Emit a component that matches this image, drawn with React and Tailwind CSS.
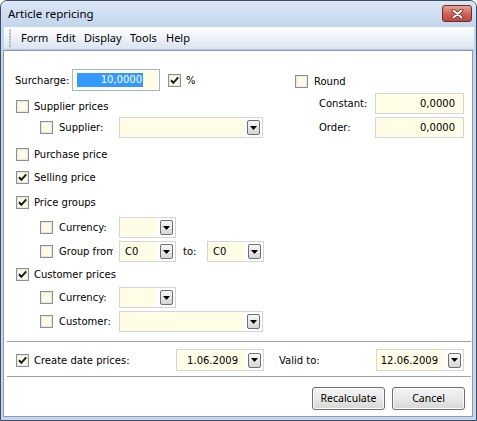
import React from "react";

function Check({ checked }) {
  return (
    <span className="w-[13px] h-[13px] shrink-0 border border-[#8e8f8f] bg-[#fcfce4] shadow-[inset_0_0_0_1px_#e6e6e6] flex items-center justify-center">
      {checked && (
        <svg width="11" height="11" viewBox="0 0 11 11">
          <path d="M2 5.2 L4.4 7.8 L9.2 2.4" fill="none" stroke="#1a1a1a" strokeWidth="2" />
        </svg>
      )}
    </span>
  );
}

function DropBtn() {
  return (
    <span className="w-[13px] h-[15px] rounded-[2px] border border-[#6f6f6f] bg-linear-to-b from-[#f7f7f7] to-[#d6d6d6] flex items-center justify-center">
      <svg width="7" height="4" viewBox="0 0 7 4">
        <path d="M0 0 H7 L3.5 4 Z" fill="#000" />
      </svg>
    </span>
  );
}

function Combo({ w, value, right }) {
  return (
    <div className={"flex h-[21px] border border-[#d2d5d9] bg-white shrink-0 " + w}>
      <div
        className={
          right
            ? "flex-1 bg-[#fffde6] flex items-center justify-end pr-[7px]"
            : "flex-1 bg-[#fffde6] flex items-center pl-[5px]"
        }
      >
        {value}
      </div>
      <div className="w-[18px] flex items-center justify-center">
        <DropBtn />
      </div>
    </div>
  );
}

function NumInput({ value }) {
  return (
    <div className="w-[89px] h-[21px] border border-[#d2d5d9] bg-[#fffde6] flex items-center justify-end pr-[8px]">
      {value}
    </div>
  );
}

function Btn({ children }) {
  return (
    <div className="w-[73px] h-[23px] rounded-[3px] border border-[#707070] bg-linear-to-b from-[#f3f3f3] via-[#e9e9e9] to-[#d6d6d6] shadow-[inset_0_0_0_1px_#fbfbfb] flex items-center justify-center font-['Noto_Sans',sans-serif] text-[10.5px] text-black">
      {children}
    </div>
  );
}

export default function App() {
  return (
    <div className="w-[477px] h-[421px] bg-[#c4d6ed] border border-[#3a4d68] rounded-t-[7px] flex flex-col overflow-hidden text-black">
      {/* Title bar */}
      <div className="h-[26px] flex items-start bg-linear-to-b from-[#dbe6f4] to-[#c3d6ed] shrink-0">
        <span className="ml-[7px] mt-[5px] font-['Noto_Sans',sans-serif] text-[11.5px] leading-[16px]">
          Article repricing
        </span>
        <div className="ml-auto mr-[4px] mt-[4px] w-[30px] h-[17px] rounded-[3px] border border-[#6b2d28] bg-linear-to-b from-[#e9a598] via-[#d0645a] to-[#c0473c] flex items-center justify-center">
          <svg width="13" height="10" viewBox="0 0 13 10">
            <path d="M2.5 1.5 L10.5 8.5 M10.5 1.5 L2.5 8.5" stroke="#5a2420" strokeWidth="3.6" strokeLinecap="round" />
            <path d="M2.5 1.5 L10.5 8.5 M10.5 1.5 L2.5 8.5" stroke="#ffffff" strokeWidth="2" strokeLinecap="round" />
          </svg>
        </div>
      </div>

      {/* Menu bar */}
      <div className="h-[23px] ml-[3px] mr-[2px] flex items-center bg-linear-to-b from-white to-[#dbe4f2] border-b border-[#b7c5d9] shrink-0 font-['Noto_Sans',sans-serif] text-[11px]">
        <svg width="3" height="19" viewBox="0 0 3 19" className="ml-[5px]">
          {[0, 1, 2, 3, 4, 5, 6].map((i) => (
            <rect key={i} x="0" y={i * 3 + 0.5} width="2" height="2" fill="#a9b5c6" />
          ))}
        </svg>
        <div className="ml-[9px] flex">
          <span className="w-[35px]">Form</span>
          <span className="w-[28px]">Edit</span>
          <span className="w-[46px]">Display</span>
          <span className="w-[36px]">Tools</span>
          <span>Help</span>
        </div>
      </div>

      {/* Content panel */}
      <div className="flex-1 ml-[2px] mr-[3px] mb-[3px] bg-white border border-[#8d9aab] flex flex-col font-['DejaVu_Sans',sans-serif] text-[10px]">
        <div className="flex">
          <div className="w-[280px] pl-[11px] flex flex-col">
            <div className="mt-[18px] h-[22px] flex items-center">
              <span className="w-[57px]">Surcharge:</span>
              <div className="w-[88px] h-[22px] border border-[#9fb6d0] bg-[#fffde6] flex items-center justify-end pr-[16px]">
                <span className="w-[66px] h-[14px] leading-[14px] bg-[#3399ff] text-white text-right pr-[1px]">10,0000</span>
              </div>
              <span className="ml-[8px]"><Check checked /></span>
              <span className="ml-[5px]">%</span>
            </div>
            <div className="mt-[4px] h-[22px] flex items-center pl-[1px]">
              <Check />
              <span className="ml-[5px]">Supplier prices</span>
            </div>
            <div className="h-[21px] flex items-center pl-[25px]">
              <Check />
              <span className="ml-[6px] mr-[6px] w-[54px] overflow-hidden whitespace-nowrap">Supplier:</span>
              <Combo w="w-[144px]" value="" />
            </div>
          </div>
          <div className="flex-1 flex flex-col">
            <div className="mt-[19px] h-[22px] flex items-center pl-[11px]">
              <Check />
              <span className="ml-[6px]">Round</span>
            </div>
            <div className="mt-[1px] h-[21px] flex items-center pl-[35px]">
              <span className="w-[56px]">Constant:</span>
              <NumInput value="0,0000" />
            </div>
            <div className="mt-[3px] h-[21px] flex items-center pl-[35px]">
              <span className="w-[56px]">Order:</span>
              <NumInput value="0,0000" />
            </div>
          </div>
        </div>

        <div className="mt-[5px] h-[22px] flex items-center pl-[12px]">
          <Check />
          <span className="ml-[5px]">Purchase price</span>
        </div>
        <div className="mt-[1px] h-[22px] flex items-center pl-[12px]">
          <Check checked />
          <span className="ml-[5px]">Selling price</span>
        </div>
        <div className="mt-[3px] h-[22px] flex items-center pl-[12px]">
          <Check checked />
          <span className="ml-[5px]">Price groups</span>
        </div>
        <div className="mt-[4px] h-[21px] flex items-center pl-[36px]">
          <Check />
          <span className="ml-[6px] mr-[6px] w-[54px] overflow-hidden whitespace-nowrap">Currency:</span>
          <Combo w="w-[57px]" value="" />
        </div>
        <div className="mt-[3px] h-[21px] flex items-center pl-[36px]">
          <Check />
          <span className="ml-[6px] mr-[6px] w-[54px] overflow-hidden whitespace-nowrap">Group from</span>
          <Combo w="w-[57px]" value="C0" />
          <span className="ml-[7px] w-[24px]">to:</span>
          <Combo w="w-[57px]" value="C0" />
        </div>
        <div className="mt-[1px] h-[22px] flex items-center pl-[12px]">
          <Check checked />
          <span className="ml-[5px]">Customer prices</span>
        </div>
        <div className="mt-[2px] h-[21px] flex items-center pl-[36px]">
          <Check />
          <span className="ml-[6px] mr-[6px] w-[54px] overflow-hidden whitespace-nowrap">Currency:</span>
          <Combo w="w-[57px]" value="" />
        </div>
        <div className="mt-[3px] h-[21px] flex items-center pl-[36px]">
          <Check />
          <span className="ml-[6px] mr-[6px] w-[54px] overflow-hidden whitespace-nowrap">Customer:</span>
          <Combo w="w-[144px]" value="" />
        </div>

        <div className="mt-[9px] h-px ml-[3px] mr-[1px] bg-[#a0a0a0]" />

        <div className="mt-[7px] h-[22px] flex items-center pl-[12px]">
          <Check checked />
          <span className="ml-[5px] w-[142px]">Create date prices:</span>
          <Combo w="w-[88px] h-[22px]" value="1.06.2009" right />
          <span className="ml-[15px] w-[97px]">Valid to:</span>
          <Combo w="w-[88px] h-[22px]" value="12.06.2009" right />
        </div>

        <div className="mt-[5px] h-px ml-[3px] mr-[1px] bg-[#a0a0a0]" />

        <div className="mt-[10px] flex justify-end gap-[7px] pr-[7px]">
          <Btn>Recalculate</Btn>
          <Btn>Cancel</Btn>
        </div>
      </div>
    </div>
  );
}
